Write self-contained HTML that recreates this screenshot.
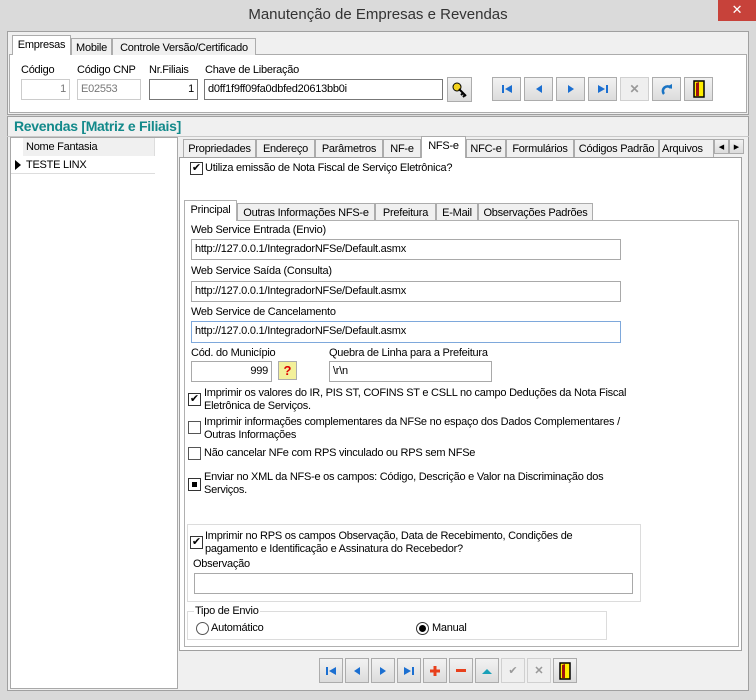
<!DOCTYPE html>
<html><head><meta charset="utf-8"><style>
*{box-sizing:border-box;margin:0;padding:0}
body{width:756px;height:700px;background:#d9d9d9;font-family:"Liberation Sans",sans-serif;font-size:11px;color:#000;position:relative;overflow:hidden;letter-spacing:-0.25px}
.a{position:absolute}
.t{position:absolute;white-space:nowrap;font-size:11px}
.inp{position:absolute;background:#fff;border:1px solid #a9a9a9;padding:3px 3px;font-size:11px;white-space:nowrap}
.tab{position:absolute;background:#f0f0f0;border:1px solid #acacac;border-bottom:none;padding:3px 2px 0;font-size:11px;white-space:nowrap;text-align:center}
.tab.sel{background:#fff;z-index:2}
.btn{position:absolute;background:linear-gradient(#f2f2f2,#dcdcdc);border:1px solid #acacac;display:flex;align-items:center;justify-content:center;letter-spacing:0}
.cb{position:absolute;width:13px;height:13px;border:1px solid #333;background:#fff;font-size:11px;line-height:11px;text-align:center;letter-spacing:0}
.rd{position:absolute;width:13px;height:13px;border:1px solid #333;border-radius:50%;background:#fff}
</style></head><body>
<!-- title -->
<div class="a" style="left:0;top:0;width:756px;height:30px;background:#dadada"></div>
<div class="t" style="left:0;width:756px;top:6px;text-align:center;font-size:15px;color:#333;letter-spacing:0">Manutenção de Empresas e Revendas</div>
<div class="a" style="left:718px;top:0;width:38px;height:21px;background:#c7423a;color:#fff;text-align:center;font-size:13px;line-height:20px">✕</div>

<!-- top panel -->
<div class="a" style="left:7px;top:31px;width:742px;height:84px;background:#f0f0f0;border:1px solid #a0a0a0"></div>
<div class="a" style="left:9px;top:54px;width:738px;height:59px;background:#fff;border:1px solid #acacac"></div>
<div class="tab sel" style="left:12px;top:35px;width:59px;height:20px">Empresas</div>
<div class="tab" style="left:71px;top:38px;width:41px;height:17px">Mobile</div>
<div class="tab" style="left:112px;top:38px;width:144px;height:17px">Controle Versão/Certificado</div>
<div class="t" style="left:21px;top:64px">Código</div>
<div class="t" style="left:77px;top:64px">Código CNP</div>
<div class="t" style="left:149px;top:64px">Nr.Filiais</div>
<div class="t" style="left:205px;top:64px">Chave de Liberação</div>
<div class="inp" style="left:21px;top:79px;width:49px;height:21px;text-align:right;color:#777;border-color:#ccc">1</div>
<div class="inp" style="left:77px;top:79px;width:64px;height:21px;color:#777;border-color:#ccc">E02553</div>
<div class="inp" style="left:149px;top:79px;width:49px;height:21px;text-align:right;border-color:#777">1</div>
<div class="inp" style="left:204px;top:79px;width:239px;height:21px;border-color:#777">d0ff1f9ff09fa0dbfed20613bb0i</div>
<div class="btn" style="left:447px;top:77px;width:25px;height:25px"><svg width="18" height="18"><circle cx="6" cy="6" r="4" fill="#f3d21c" stroke="#000" stroke-width="1"/><path d="M8 8 L15 15 M12 12 L10 14 M14 14 L12 16" stroke="#000" stroke-width="2"/></svg></div>
<div class="btn" style="left:492px;top:77px;width:29px;height:24px"><svg width="12" height="10"><rect x="1" y="1" width="2" height="8" fill="#1b6fd1"/><path d="M11 1 L4 5 L11 9Z" fill="#1b6fd1"/></svg></div>
<div class="btn" style="left:524px;top:77px;width:29px;height:24px"><svg width="10" height="10"><path d="M8 1 L2 5 L8 9Z" fill="#1b6fd1"/></svg></div>
<div class="btn" style="left:556px;top:77px;width:29px;height:24px"><svg width="10" height="10"><path d="M2 1 L8 5 L2 9Z" fill="#1b6fd1"/></svg></div>
<div class="btn" style="left:588px;top:77px;width:29px;height:24px"><svg width="12" height="10"><path d="M1 1 L8 5 L1 9Z" fill="#1b6fd1"/><rect x="9" y="1" width="2" height="8" fill="#1b6fd1"/></svg></div>
<div class="btn" style="left:620px;top:77px;width:29px;height:24px;background:#efefef;border-color:#d0d0d0"><span style="color:#999;font-size:12px;font-weight:bold">✕</span></div>
<div class="btn" style="left:652px;top:77px;width:29px;height:24px"><svg width="12" height="12"><path d="M3 11 A4.5 4.5 0 1 1 10 5" stroke="#1a74c4" stroke-width="2.5" fill="none"/><path d="M7 3 L11 6 L11 1Z" fill="#1a74c4"/></svg></div>
<div class="btn" style="left:684px;top:77px;width:29px;height:24px"><svg width="12" height="18"><rect x="1" y="1" width="10" height="16" fill="#ffee00" stroke="#000" stroke-width="1.5"/><path d="M3 3 L6 2 L6 16 L3 16Z" fill="#a01010"/></svg></div>

<!-- lower panel -->
<div class="a" style="left:7px;top:116px;width:742px;height:575px;background:#f0f0f0;border:1px solid #a0a0a0"></div>
<div class="t" style="left:14px;top:118px;font-size:14px;font-weight:bold;color:#12898a;letter-spacing:-0.3px">Revendas [Matriz e Filiais]</div>
<div class="a" style="left:7px;top:136px;width:742px;height:1px;background:#c8c8c8"></div>
<div class="a" style="left:10px;top:137px;width:168px;height:552px;background:#fff;border:1px solid #a8a8a8"></div>
<div class="a" style="left:23px;top:138px;width:132px;height:18px;background:#f0f0f0;border-right:1px solid #ddd"></div>
<div class="t" style="left:26px;top:141px">Nome Fantasia</div>
<div class="a" style="left:11px;top:156px;width:144px;height:18px;border-bottom:1px solid #ddd"></div>
<div class="a" style="left:15px;top:160px;width:0;height:0;border-left:6px solid #000;border-top:5px solid transparent;border-bottom:5px solid transparent"></div>
<div class="t" style="left:26px;top:159px">TESTE LINX</div>

<!-- right tabs -->
<div class="a" style="left:179px;top:157px;width:563px;height:494px;background:#fff;border:1px solid #a0a0a0"></div>
<div class="tab" style="left:183px;top:139px;width:73px;height:18px">Propriedades</div>
<div class="tab" style="left:256px;top:139px;width:59px;height:18px">Endereço</div>
<div class="tab" style="left:315px;top:139px;width:68px;height:18px">Parâmetros</div>
<div class="tab" style="left:383px;top:139px;width:38px;height:18px">NF-e</div>
<div class="tab sel" style="left:421px;top:136px;width:45px;height:22px">NFS-e</div>
<div class="tab" style="left:466px;top:139px;width:40px;height:18px">NFC-e</div>
<div class="tab" style="left:506px;top:139px;width:68px;height:18px">Formulários</div>
<div class="tab" style="left:574px;top:139px;width:85px;height:18px">Códigos Padrão</div>
<div class="tab" style="left:659px;top:139px;width:55px;height:18px;overflow:hidden;text-align:left">Arquivos</div>
<div class="btn" style="left:714px;top:139px;width:15px;height:15px;font-size:7px">◀</div>
<div class="btn" style="left:729px;top:139px;width:15px;height:15px;font-size:7px">▶</div>
<div class="cb" style="left:190px;top:162px">✔</div>
<div class="t" style="left:205px;top:162px">Utiliza emissão de Nota Fiscal de Serviço Eletrônica?</div>

<!-- inner tabs -->
<div class="a" style="left:184px;top:220px;width:555px;height:427px;background:#fff;border:1px solid #b0b0b0"></div>
<div class="tab sel" style="left:184px;top:200px;width:53px;height:21px;border-color:#b0b0b0">Principal</div>
<div class="tab" style="left:237px;top:203px;width:138px;height:17px">Outras Informações NFS-e</div>
<div class="tab" style="left:375px;top:203px;width:61px;height:17px">Prefeitura</div>
<div class="tab" style="left:436px;top:203px;width:42px;height:17px">E-Mail</div>
<div class="tab" style="left:478px;top:203px;width:115px;height:17px">Observações Padrões</div>

<div class="t" style="left:191px;top:224px">Web Service Entrada (Envio)</div>
<div class="inp" style="left:191px;top:239px;width:430px;height:21px">http://127.0.0.1/IntegradorNFSe/Default.asmx</div>
<div class="t" style="left:191px;top:265px">Web Service Saída (Consulta)</div>
<div class="inp" style="left:191px;top:281px;width:430px;height:21px">http://127.0.0.1/IntegradorNFSe/Default.asmx</div>
<div class="t" style="left:191px;top:306px">Web Service de Cancelamento</div>
<div class="inp" style="left:191px;top:321px;width:430px;height:22px;border-color:#7ea8db">http://127.0.0.1/IntegradorNFSe/Default.asmx</div>
<div class="t" style="left:191px;top:347px">Cód. do Município</div>
<div class="inp" style="left:191px;top:361px;width:81px;height:21px;text-align:right">999</div>
<div class="btn" style="left:278px;top:361px;width:19px;height:19px;background:#f3f09a;color:#d00;font-weight:bold;font-size:13px">?</div>
<div class="t" style="left:329px;top:347px">Quebra de Linha para a Prefeitura</div>
<div class="inp" style="left:329px;top:361px;width:163px;height:21px">\r\n</div>

<div class="cb" style="left:188px;top:393px">✔</div>
<div class="t" style="left:204px;top:387px;line-height:13px">Imprimir os valores do IR, PIS ST, COFINS ST e CSLL no campo Deduções da Nota Fiscal<br>Eletrônica de Serviços.</div>
<div class="cb" style="left:188px;top:421px;border-color:#555"></div>
<div class="t" style="left:204px;top:416px;line-height:13px">Imprimir informações complementares da NFSe no espaço dos Dados Complementares /<br>Outras Informações</div>
<div class="cb" style="left:188px;top:447px;border-color:#555"></div>
<div class="t" style="left:204px;top:447px">Não cancelar NFe com RPS vinculado ou RPS sem NFSe</div>
<div class="cb" style="left:188px;top:478px"><div style="width:5px;height:5px;background:#000;margin:3px"></div></div>
<div class="t" style="left:204px;top:471px;line-height:13px">Enviar no XML da NFS-e os campos: Código, Descrição e Valor na Discriminação dos<br>Serviços.</div>

<div class="a" style="left:187px;top:524px;width:454px;height:78px;border:1px solid #dcdcdc"></div>
<div class="cb" style="left:190px;top:536px">✔</div>
<div class="t" style="left:205px;top:530px;line-height:13px">Imprimir no RPS os campos Observação, Data de Recebimento, Condições de<br>pagamento e Identificação e Assinatura do Recebedor?</div>
<div class="t" style="left:193px;top:558px">Observação</div>
<div class="inp" style="left:194px;top:573px;width:439px;height:21px"></div>

<div class="a" style="left:187px;top:611px;width:420px;height:29px;border:1px solid #dcdcdc"></div>
<div class="t" style="left:194px;top:605px;background:#fff;padding:0 1px">Tipo de Envio</div>
<div class="rd" style="left:196px;top:622px;border-color:#555"></div>
<div class="t" style="left:211px;top:622px">Automático</div>
<div class="rd" style="left:416px;top:622px"><div style="width:7px;height:7px;border-radius:50%;background:#000;margin:2px"></div></div>
<div class="t" style="left:432px;top:622px">Manual</div>

<!-- bottom buttons -->
<div class="btn" style="left:319px;top:658px;width:24px;height:25px"><svg width="12" height="10"><rect x="1" y="1" width="2" height="8" fill="#1b6fd1"/><path d="M11 1 L4 5 L11 9Z" fill="#1b6fd1"/></svg></div>
<div class="btn" style="left:345px;top:658px;width:24px;height:25px"><svg width="10" height="10"><path d="M8 1 L2 5 L8 9Z" fill="#1b6fd1"/></svg></div>
<div class="btn" style="left:371px;top:658px;width:24px;height:25px"><svg width="10" height="10"><path d="M2 1 L8 5 L2 9Z" fill="#1b6fd1"/></svg></div>
<div class="btn" style="left:397px;top:658px;width:24px;height:25px"><svg width="12" height="10"><path d="M1 1 L8 5 L1 9Z" fill="#1b6fd1"/><rect x="9" y="1" width="2" height="8" fill="#1b6fd1"/></svg></div>
<div class="btn" style="left:423px;top:658px;width:24px;height:25px"><svg width="12" height="12"><path d="M6 1V11M1 6H11" stroke="#e8401c" stroke-width="3"/></svg></div>
<div class="btn" style="left:449px;top:658px;width:24px;height:25px"><svg width="12" height="6"><rect x="1" y="1" width="10" height="3" fill="#e8401c"/></svg></div>
<div class="btn" style="left:475px;top:658px;width:24px;height:25px"><svg width="12" height="8"><path d="M1 7 L6 2 L11 7Z" fill="#1aa0b8"/></svg></div>
<div class="btn" style="left:501px;top:658px;width:24px;height:25px;background:#efefef;border-color:#d0d0d0;color:#999;font-size:11px">✔</div>
<div class="btn" style="left:527px;top:658px;width:24px;height:25px;background:#efefef;border-color:#d0d0d0;color:#999;font-weight:bold">✕</div>
<div class="btn" style="left:553px;top:658px;width:24px;height:25px"><svg width="12" height="18"><rect x="1" y="1" width="10" height="16" fill="#ffee00" stroke="#000" stroke-width="1.5"/><path d="M3 3 L6 2 L6 16 L3 16Z" fill="#a01010"/></svg></div>
</body></html>
